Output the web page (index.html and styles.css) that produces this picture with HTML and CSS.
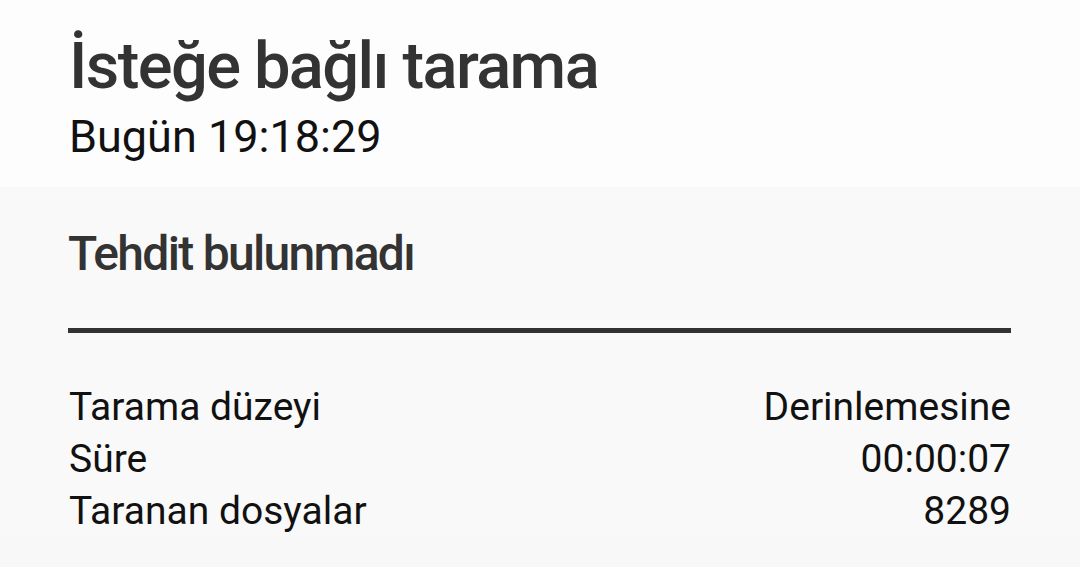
FILE: index.html
```html
<!DOCTYPE html>
<html lang="tr">
<head>
<meta charset="utf-8">
<link rel="stylesheet" href="styles.css">
</head>
<body>
<div class="page">
  <header class="head">
    <h1 class="title">İsteğe bağlı tarama</h1>
    <div class="date">Bugün 19:18:29</div>
  </header>
  <section class="result">
    <h2 class="status">Tehdit bulunmadı</h2>
    <div class="rule"></div>
    <div class="rows">
      <div class="row"><span>Tarama düzeyi</span><span>Derinlemesine</span></div>
      <div class="row"><span>Süre</span><span>00:00:07</span></div>
      <div class="row"><span>Taranan dosyalar</span><span>8289</span></div>
    </div>
  </section>
</div>
</body>
</html>
```
FILE: styles.css
```css
html, body {
  margin: 0;
  padding: 0;
  background: #f8f8f8;
}
.page {
  width: 1080px;
  height: 567px;
  overflow: hidden;
  font-family: Roboto, "Noto Sans", sans-serif;
  color: #111;
}
.head {
  background: #fdfdfd;
  height: 187px;
  box-sizing: border-box;
  padding: 28px 0 0 69px;
}
.title {
  margin: 0;
  font-size: 65px;
  line-height: 76px;
  font-weight: 500;
  letter-spacing: -1.6px;
  color: #333;
}
.date {
  margin-top: 7px;
  font-size: 45px;
  line-height: 52px;
}
.result {
  background: #f9f9f9;
  padding: 38px 69px 0 68px;
}
.status {
  margin: 0;
  font-size: 48px;
  line-height: 58px;
  font-weight: 500;
  letter-spacing: -1.7px;
  color: #333;
}
.rule {
  margin-top: 45px;
  height: 5px;
  background: #333;
}
.rows {
  margin-top: 48px;
  padding-left: 1px;
}
.row {
  display: flex;
  justify-content: space-between;
  font-size: 39px;
  line-height: 52px;
}
```
